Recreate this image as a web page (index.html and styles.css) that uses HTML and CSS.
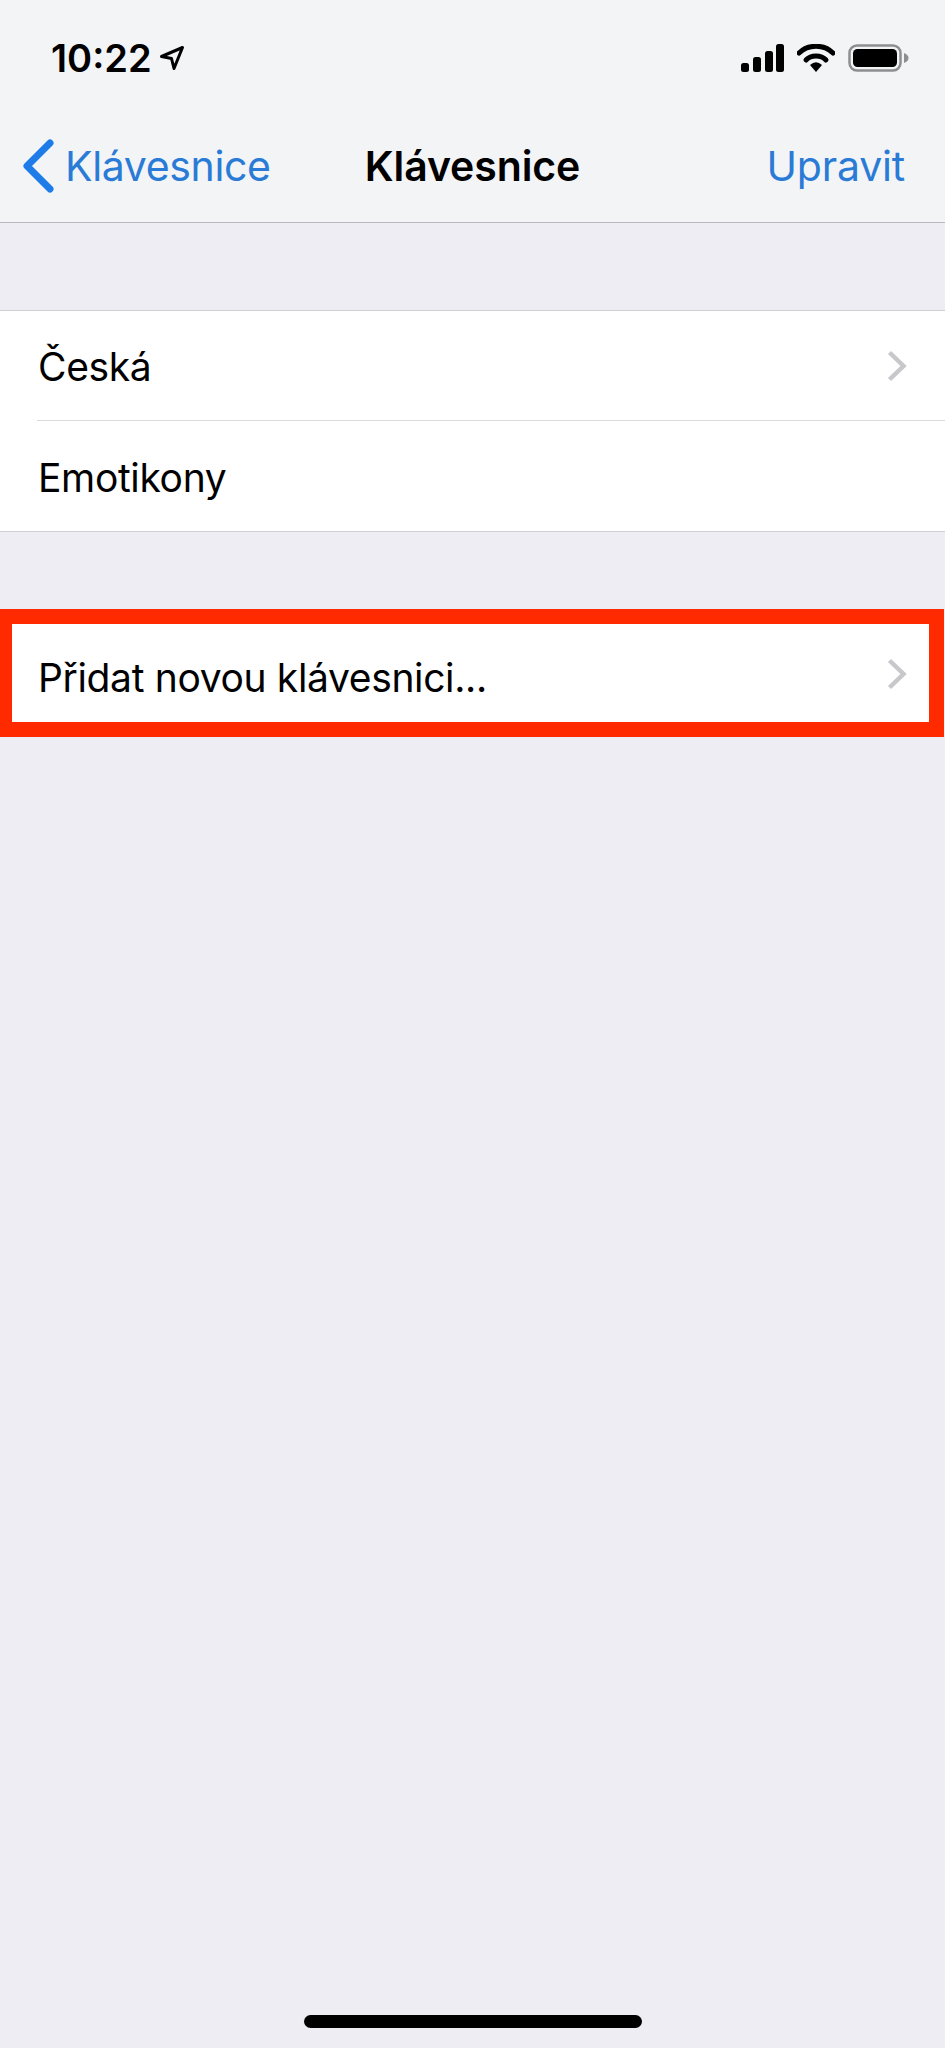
FILE: index.html
```html
<!DOCTYPE html>
<html lang="cs">
<head>
    <meta charset="UTF-8">
    <meta name="viewport" content="width=device-width, initial-scale=1.0">
    <title>Klávesnice</title>
    <link rel="stylesheet" href="styles.css">
</head>
<body>
    <div class="page">
        <header class="top-bar">
            <div class="status-bar">
                <div class="status-time">
                    <span>10:22</span>
                    <svg class="icon-location" viewBox="0 0 26 26" width="26" height="26">
                        <path d="M2.5 11.5 L23.5 2.5 L15 23.5 L12.5 13.5 Z" fill="none" stroke="#000" stroke-width="3" stroke-linejoin="round"/>
                    </svg>
                </div>
                <div class="status-icons">
                    <svg viewBox="0 0 43 28" width="43" height="28">
                        <rect x="0" y="19" width="8" height="9" rx="2.5" fill="#000"/>
                        <rect x="12" y="13" width="8" height="15" rx="2.5" fill="#000"/>
                        <rect x="24" y="7" width="8" height="21" rx="2.5" fill="#000"/>
                        <rect x="35" y="0" width="8" height="28" rx="2.5" fill="#000"/>
                    </svg>
                    <svg viewBox="0 0 38 28" width="38" height="28">
                        <path d="M2 9 C11 0 27 0 36 9" fill="none" stroke="#000" stroke-width="5" stroke-linecap="round"/>
                        <path d="M9 16 C14 10.500 24 10.500 29 16" fill="none" stroke="#000" stroke-width="5" stroke-linecap="round"/>
                        <path d="M13 21 Q19 15.500 25 21 L19 28 Z" fill="#000"/>
                    </svg>
                    <svg viewBox="0 0 61 28" width="61" height="28">
                        <rect x="1.500" y="1.500" width="51" height="25" rx="7.500" fill="none" stroke="#8e8e90" stroke-width="2.500"/>
                        <rect x="5" y="5" width="44" height="18" rx="4.500" fill="#000"/>
                        <path d="M56 9 C59 10 60.500 12 60.500 14 C60.500 16 59 18 56 19 Z" fill="#8e8e90"/>
                    </svg>
                </div>
            </div>
            <nav class="nav-bar">
                <a class="nav-back">
                    <svg viewBox="0 0 32 54" width="32" height="54">
                        <path d="M28 4 L5 27 L28 50" fill="none" stroke="#1e7ce8" stroke-width="7" stroke-linecap="round" stroke-linejoin="round"/>
                    </svg>
                    <span>Klávesnice</span>
                </a>
                <div class="nav-title">Klávesnice</div>
                <a class="nav-action">Upravit</a>
            </nav>
        </header>

        <section class="group">
            <div class="row row-divided">
                <span>Česká</span>
                <svg class="chevron" viewBox="0 0 20 32" width="20" height="32">
                    <path d="M2.500 2.500 L16.500 16 L2.500 29.500" fill="none" stroke="#c7c7cc" stroke-width="4.500"/>
                </svg>
            </div>
            <div class="row row-plain">
                <span>Emotikony</span>
            </div>
        </section>

        <section class="highlight">
            <div class="row row-add">
                <span>Přidat novou klávesnici...</span>
                <svg class="chevron" viewBox="0 0 20 32" width="20" height="32">
                    <path d="M2.500 2.500 L16.500 16 L2.500 29.500" fill="none" stroke="#c7c7cc" stroke-width="4.500"/>
                </svg>
            </div>
        </section>

        <div class="home-indicator"></div>
    </div>
</body>
</html>
```

FILE: styles.css
```css
* {
    box-sizing: border-box;
}
html, body {
    margin: 0;
    padding: 0;
}
body {
    font-family: Inter, "Liberation Sans", sans-serif;
    background-color: #eeedf3;
    color: #000;
}
.page {
    display: flex;
    flex-direction: column;
    height: 2048px;
    overflow: hidden;
}
.top-bar {
    height: 223px;
    background-color: #f3f4f6;
    border-bottom: 1px solid #b9b9bd;
}
.status-bar {
    display: flex;
    justify-content: space-between;
    align-items: center;
    height: 28px;
    margin-top: 44px;
    padding: 0 36px 0 51px;
}
.status-time {
    display: flex;
    align-items: center;
    gap: 7px;
    font-size: 38px;
    font-weight: 600;
}
.status-icons {
    display: flex;
    align-items: center;
    gap: 13px;
}
.nav-bar {
    display: grid;
    grid-template-columns: 1fr auto 1fr;
    align-items: center;
    height: 54px;
    margin-top: 67px;
    padding: 0 40px;
    font-size: 41px;
}
.nav-back {
    display: flex;
    align-items: center;
    gap: 11px;
    margin-left: -18px;
    color: #2a7bd6;
    letter-spacing: -0.35px;
}
.nav-title {
    font-weight: 600;
    letter-spacing: -0.1px;
}
.nav-action {
    justify-self: end;
    color: #2a7bd6;
    letter-spacing: -0.2px;
}
.group {
    margin-top: 87px;
    background-color: #fff;
    border-top: 1px solid #cfcfd4;
    border-bottom: 1px solid #cfcfd4;
}
.row {
    display: flex;
    justify-content: space-between;
    align-items: center;
    height: 110px;
    padding: 0 38px;
    font-size: 39px;
    letter-spacing: -0.35px;
    background-color: #fff;
}
.row-divided {
    position: relative;
}
.row-divided::after {
    content: "";
    position: absolute;
    left: 37px;
    right: 0;
    bottom: 0;
    height: 1px;
    background-color: #d9d9dc;
}
.row-plain span {
    margin-top: 2px;
}
.chevron {
    flex: none;
}
.highlight {
    margin-top: 77px;
    margin-right: 1px;
    border: solid #ff2a00;
    border-width: 15px 15px 15px 12px;
}
.row-add {
    height: 98px;
    padding: 0 22px 0 26px;
}
.row-add span {
    margin-top: 8px;
}
.row-add .chevron {
    margin-top: 2px;
}
.home-indicator {
    width: 338px;
    height: 13px;
    margin: auto auto 20px;
    border-radius: 7px;
    background-color: #000;
}
```
